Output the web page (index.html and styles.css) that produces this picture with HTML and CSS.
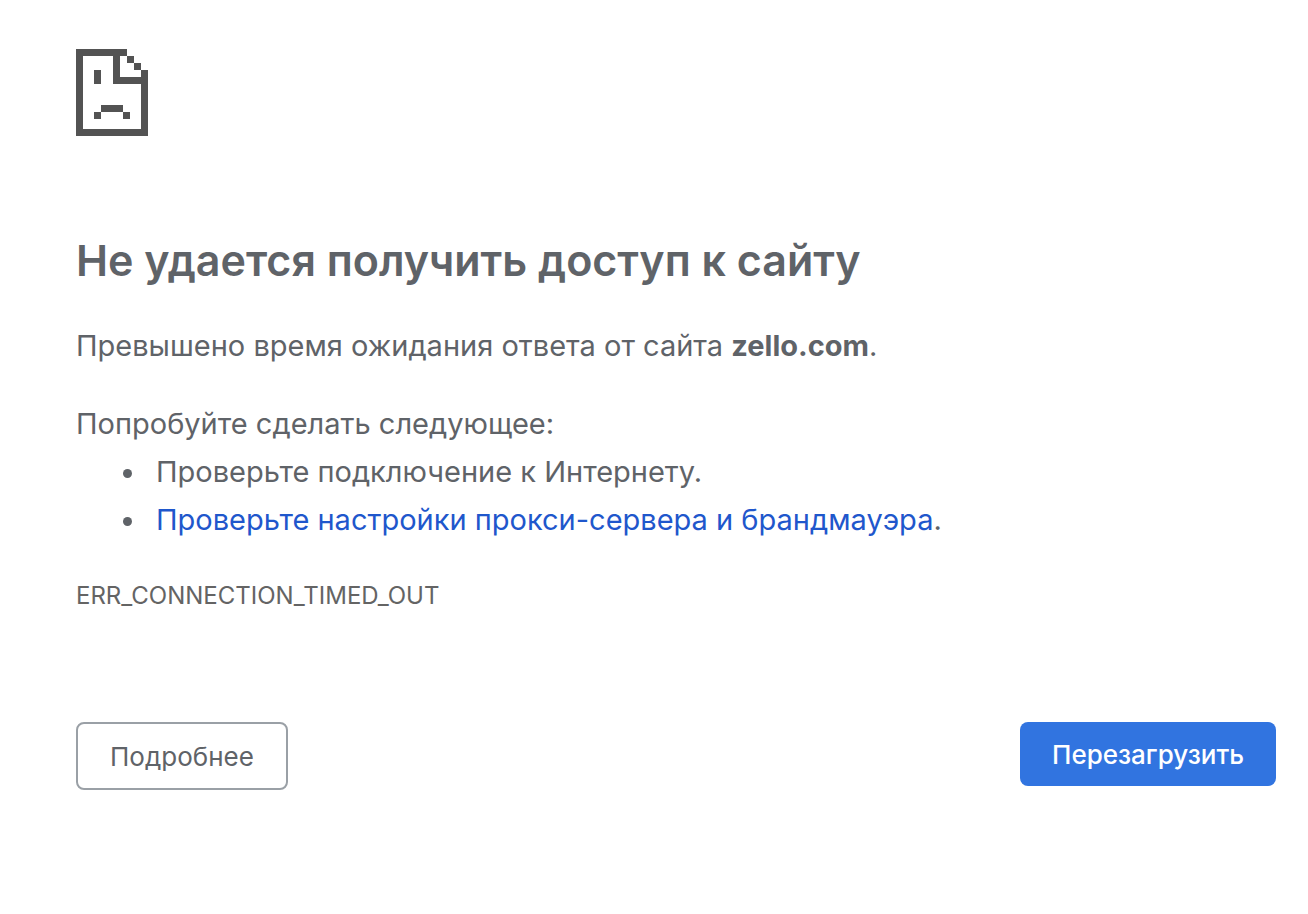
FILE: index.html
```html
<!DOCTYPE html>
<html lang="ru">
<head>
    <meta charset="UTF-8">
    <meta name="viewport" content="width=device-width, initial-scale=1.0">
    <title>zello.com</title>
    <link rel="stylesheet" href="styles.css">
</head>
<body>
    <main class="container">
        <svg class="icon" viewBox="0 0 72 87" shape-rendering="crispEdges" aria-hidden="true">
            <path d="M0 0H51V7H7V80H65V35H37V7H44V28H72V87H0Z"/>
            <path d="M51 7h7v7h-7zM58 14h7v7h-7zM65 21h7v7h-7z"/>
            <path d="M18 21h7v14h-7zM25 56h22v7h-22zM18 63h7v7h-7zM47 63h7v7h-7z"/>
        </svg>

        <h1>Не удается получить доступ к сайту</h1>
        <p class="summary">Превышено время ожидания ответа от сайта <strong>zello.com</strong>.</p>

        <div class="suggestions">
            <p>Попробуйте сделать следующее:</p>
            <ul>
                <li>Проверьте подключение к Интернету.</li>
                <li><a href="#buttons">Проверьте настройки прокси-сервера и брандмауэра</a>.</li>
            </ul>
        </div>

        <div class="error-code">ERR_CONNECTION_TIMED_OUT</div>

        <div class="buttons" id="buttons">
            <button type="button" class="btn">Подробнее</button>
            <button type="button" class="btn btn-primary">Перезагрузить</button>
        </div>
    </main>
</body>
</html>
```
FILE: styles.css
```css
body {
    margin: 0;
    background: #ffffff;
    color: #5f6368;
    font-family: Inter, sans-serif;
    font-size: 29px;
    line-height: 48px;
}
.container {
    padding: 49px 32px 48px 76px;
}
.icon {
    display: block;
    width: 72px;
    height: 87px;
    fill: #535353;
}
h1 {
    margin: 94px 0 32px;
    font-size: 43px;
    font-weight: 600;
    line-height: 60px;
}
p {
    margin: 0;
}
.summary {
    margin-bottom: 30px;
}
ul {
    margin: 0;
    padding-left: 72px;
}
li {
    padding-left: 8px;
}
a {
    color: #1f57cc;
    text-decoration: none;
}
.error-code {
    margin-top: 32px;
    color: #646464;
    font-size: 24px;
    line-height: 40px;
}
.buttons {
    display: flex;
    justify-content: space-between;
    align-items: flex-start;
    margin-top: 106px;
}
.btn {
    padding: 17px 32px 15px;
    border: 2px solid #9aa0a6;
    border-radius: 8px;
    background: #ffffff;
    color: #5f6368;
    font-family: inherit;
    font-size: 26px;
    line-height: 32px;
    cursor: pointer;
}
.btn-primary {
    border: none;
    background: #3174e0;
    color: #ffffff;
    font-weight: 500;
}
```
